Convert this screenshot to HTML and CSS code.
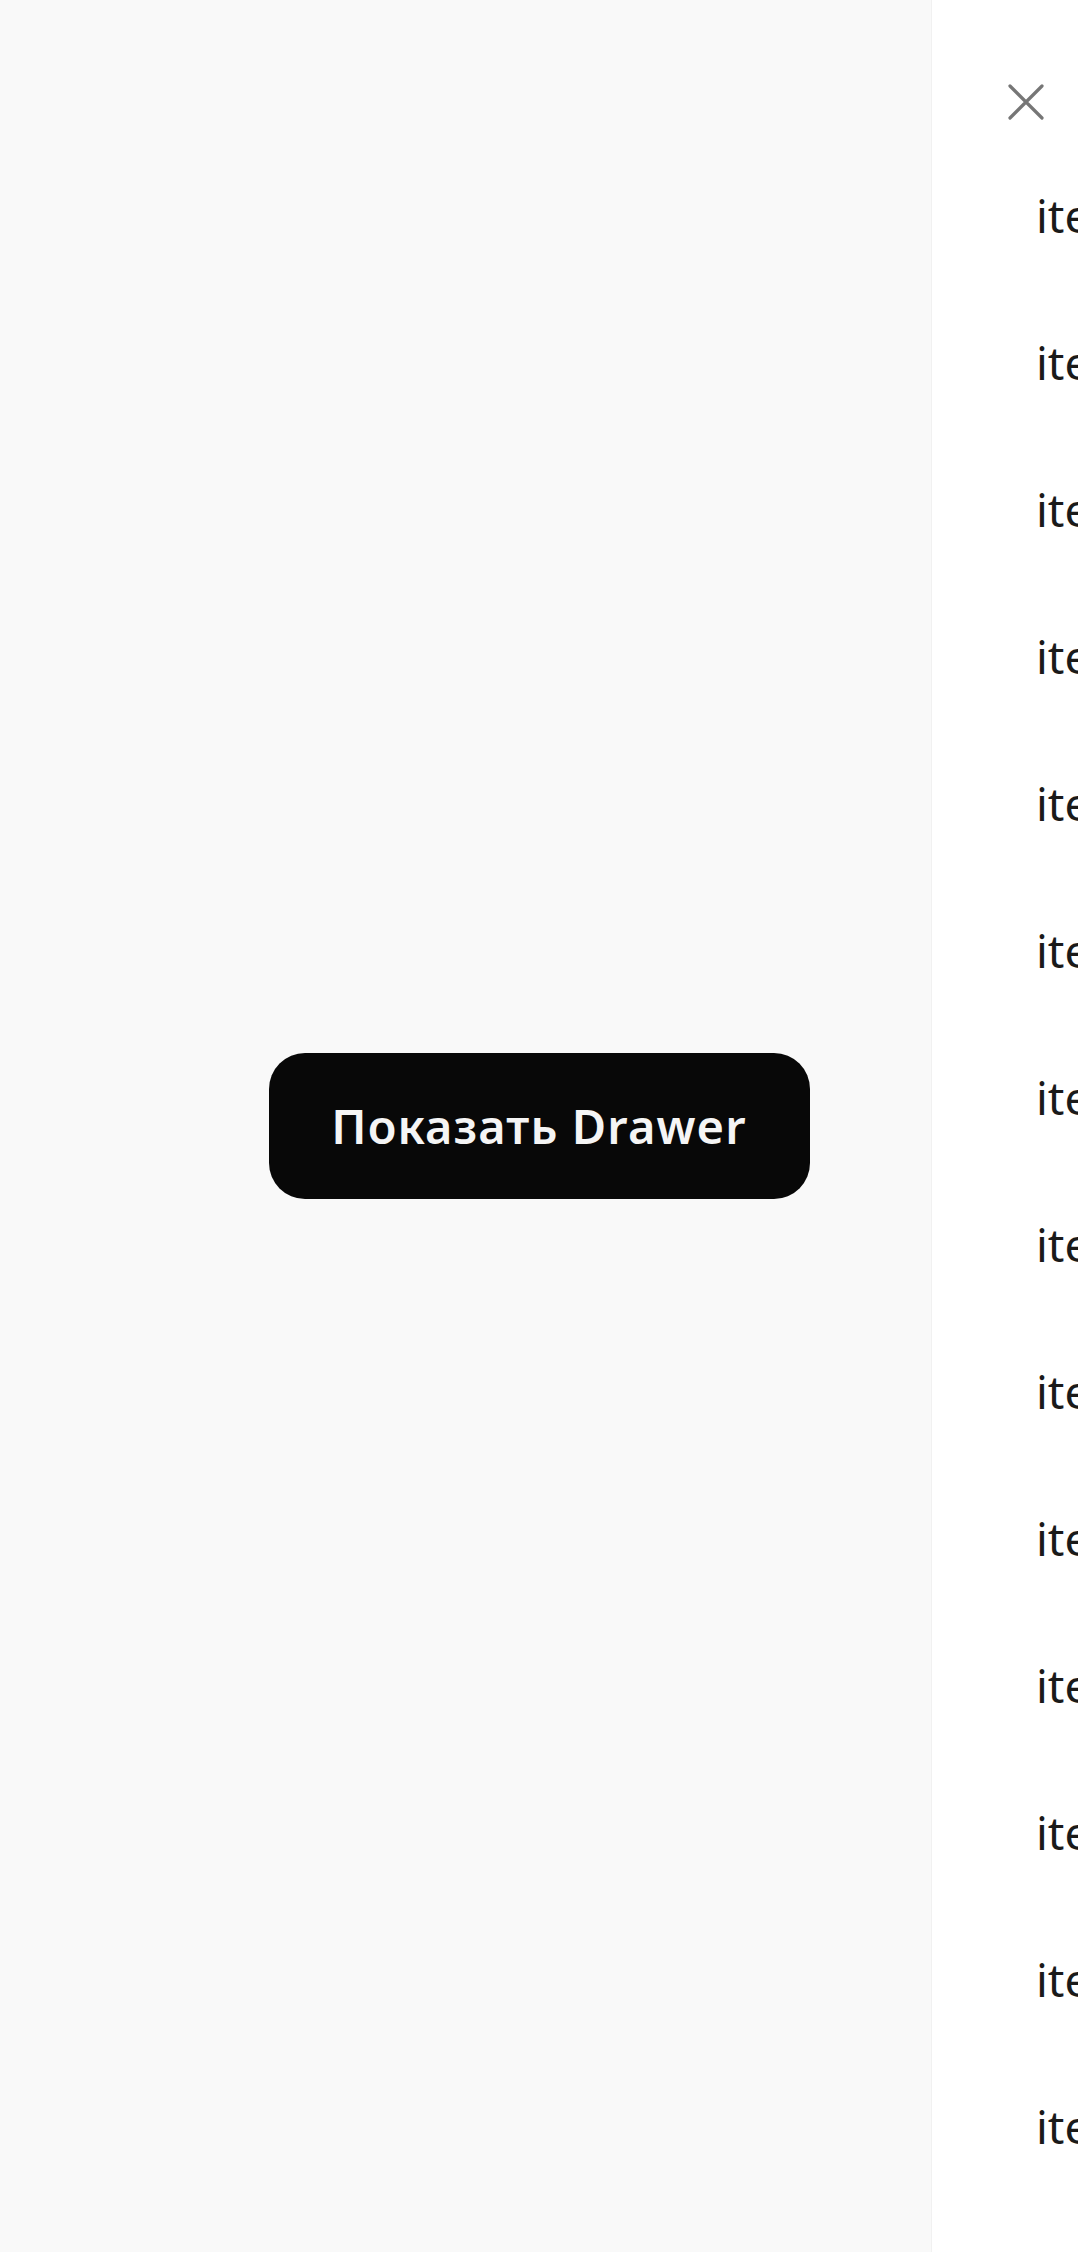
FILE: index.html
```html
<!DOCTYPE html>
<html lang="ru">
<head>
<meta charset="utf-8">
<title>Drawer</title>
<link rel="stylesheet" href="styles.css">
</head>
<body>
<main class="main">
  <button class="show-btn" type="button">Показать Drawer</button>
</main>
<aside class="drawer">
  <div class="drawer-inner">
    <div class="drawer-head">
      <button class="close" type="button" aria-label="Закрыть">
        <svg width="36" height="36" viewBox="0 0 36 36" fill="none" stroke="#767676" stroke-width="3.2" stroke-linecap="round">
          <path d="M2 2 L34 34 M34 2 L2 34"/>
        </svg>
      </button>
    </div>
    <ul class="items">
      <li class="item">item 1</li>
      <li class="item">item 2</li>
      <li class="item">item 3</li>
      <li class="item">item 4</li>
      <li class="item">item 5</li>
      <li class="item">item 6</li>
      <li class="item">item 7</li>
      <li class="item">item 8</li>
      <li class="item">item 9</li>
      <li class="item">item 10</li>
      <li class="item">item 11</li>
      <li class="item">item 12</li>
      <li class="item">item 13</li>
      <li class="item">item 14</li>
    </ul>
  </div>
</aside>
</body>
</html>
```
FILE: styles.css
```css
html, body {
  margin: 0;
  padding: 0;
}
body {
  background: #f9f9f9;
  font-family: "Noto Sans", "Open Sans", sans-serif;
  overflow: hidden;
}
.main {
  height: 2252px;
  width: 1078px;
  display: flex;
  align-items: center;
  justify-content: center;
  background: #f9f9f9;
}
.show-btn {
  width: 541px;
  height: 146px;
  border: none;
  border-radius: 36px;
  background: #080808;
  color: #f5f5f5;
  font-family: "Noto Sans", "Open Sans", sans-serif;
  font-size: 47px;
  font-weight: 600;
  letter-spacing: 1.1px;
  padding: 0;
  margin: 0;
}
.drawer {
  position: fixed;
  top: 0;
  bottom: 0;
  left: 931px;
  right: 0;
  overflow: hidden;
  background: #ffffff;
  border-left: 1px solid #f1f1f1;
}
.drawer-inner {
  width: 400px;
}
.drawer-head {
  height: 141px;
  box-sizing: border-box;
  padding: 84px 0 0 76px;
}
.close {
  border: none;
  background: none;
  padding: 0;
  width: 36px;
  height: 36px;
  display: block;
}
.close svg {
  display: block;
}
.items {
  list-style: none;
  margin: 0;
  padding: 0 0 0 104px;
}
.item {
  height: 147px;
  display: flex;
  align-items: center;
  font-size: 46px;
  color: #1a1a1a;
  white-space: nowrap;
}
```
